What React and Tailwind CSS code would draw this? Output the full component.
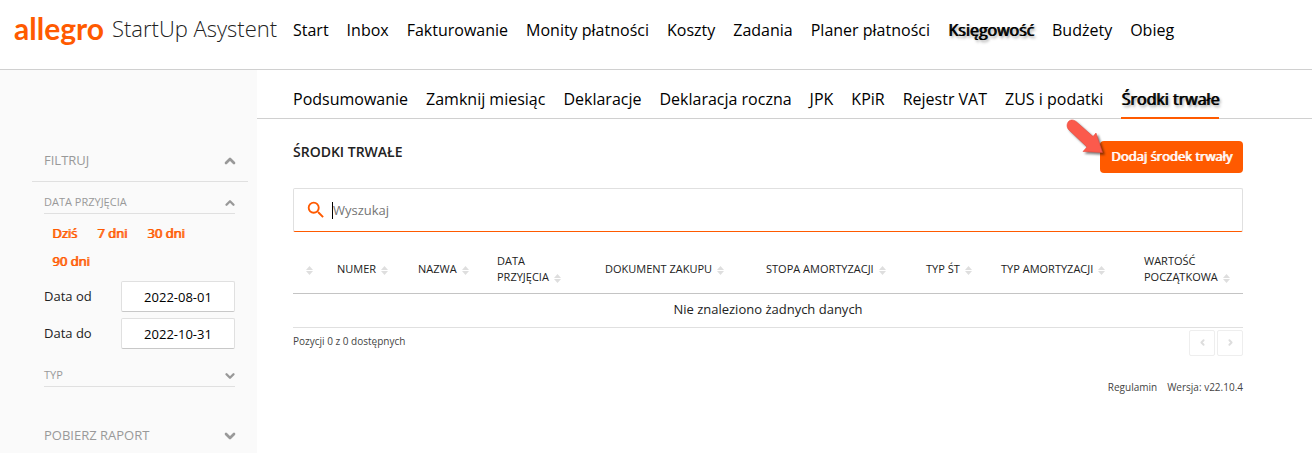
import { ChevronDown, ChevronLeft, ChevronRight, ChevronUp } from 'lucide-react';
import { MdSearch } from 'react-icons/md';

const MAIN_NAV = [
  'Start',
  'Inbox',
  'Fakturowanie',
  'Monity płatności',
  'Koszty',
  'Zadania',
  'Planer płatności',
  'Księgowość',
  'Budżety',
  'Obieg',
];

const SUB_NAV = [
  'Podsumowanie',
  'Zamknij miesiąc',
  'Deklaracje',
  'Deklaracja roczna',
  'JPK',
  'KPiR',
  'Rejestr VAT',
  'ZUS i podatki',
  'Środki trwałe',
];

const RANGES = ['Dziś', '7 dni', '30 dni', '90 dni'];

const COLUMNS = [
  { lines: [], width: 'w-[36px]' },
  { lines: ['NUMER'], width: 'w-[81px]' },
  { lines: ['NAZWA'], width: 'w-[79px]' },
  { lines: ['DATA', 'PRZYJĘCIA'], width: 'w-[108px]' },
  { lines: ['DOKUMENT ZAKUPU'], width: 'w-[161px]' },
  { lines: ['STOPA AMORTYZACJI'], width: 'w-[160px]' },
  { lines: ['TYP ŚT'], width: 'w-[75px]' },
  { lines: ['TYP AMORTYZACJI'], width: 'w-[143px]' },
  { lines: ['WARTOŚĆ', 'POCZĄTKOWA'], width: 'w-[107px]' },
];

const ACTIVE_LINK = '[text-shadow:1px_0_0_currentColor,2px_2px_3px_rgba(0,0,0,0.45)]';

function SortIcon() {
  return (
    <svg className="inline-block align-middle w-[7px] h-[9px] ml-0.5 fill-[#dedede]" viewBox="0 0 7 9" aria-hidden="true">
      <path d="M3.5 0L7 4H0zM0 5h7L3.5 9z" />
    </svg>
  );
}

function Header() {
  return (
    <header className="flex items-center h-[70px] pb-2.5 border-b border-[#d0d0d0] bg-white">
      <a href="#start" className="flex items-center w-[293px] shrink-0 pl-[14px] pb-1 gap-2 whitespace-nowrap">
        <span className="font-['Lato'] font-bold text-[30px] leading-8 text-[#ff5a00]">allegro</span>
        <span className="font-light text-[22px] leading-8 text-[#222]">StartUp Asystent</span>
      </a>
      <nav className="flex gap-[18px] text-base whitespace-nowrap text-black">
        {MAIN_NAV.map((item) => (
          <a key={item} href="#nav" className={item === 'Księgowość' ? ACTIVE_LINK : ''}>
            {item}
          </a>
        ))}
      </nav>
    </header>
  );
}

function Sidebar() {
  return (
    <aside className="w-[257px] shrink-0 bg-[#fafafa] pt-[70px] pl-8 pr-[9px] text-[#999]">
      <button className="flex w-full items-center justify-between h-[42px] pl-3 pr-2.5 border-b border-[#e0e0e0] text-[13px]">
        FILTRUJ
        <ChevronUp size={16} strokeWidth={4} />
      </button>

      <div className="pl-3 pr-[13px]">
        <button className="flex w-full items-end justify-between h-8 pb-[3px] border-b border-[#e0e0e0] text-[11px] leading-4">
          DATA PRZYJĘCIA
          <ChevronUp size={14} strokeWidth={4} className="-mr-0.5" />
        </button>

        {/* Quick ranges */}
        <div className="flex flex-wrap gap-x-5 px-2 pt-1.5 pb-[5px] text-[13px] text-[#ff5a00]">
          {RANGES.map((range) => (
            <button key={range} className="h-7 [text-shadow:1px_0_0_currentColor]">{range}</button>
          ))}
        </div>

        {/* Date range */}
        <div className="flex flex-col gap-1.5 text-[13px] text-[#222]">
          <div className="flex items-center justify-between">
            <label htmlFor="date-from">Data od</label>
            <input
              id="date-from"
              defaultValue="2022-08-01"
              className="w-[114px] h-[31px] rounded-xs border border-[#e0e0e0] border-b-[#c8c8c8] bg-white text-center text-black"
            />
          </div>
          <div className="flex items-center justify-between">
            <label htmlFor="date-to">Data do</label>
            <input
              id="date-to"
              defaultValue="2022-10-31"
              className="w-[114px] h-[31px] rounded-xs border border-[#e0e0e0] border-b-[#c8c8c8] bg-white text-center text-black"
            />
          </div>
        </div>

        <button className="flex w-full items-end justify-between h-[38px] pb-[3px] border-b border-[#e0e0e0] text-[11px] leading-4">
          TYP
          <ChevronDown size={14} strokeWidth={4} className="-mr-0.5" />
        </button>
      </div>

      <button className="flex w-full items-center justify-between mt-[30px] h-[38px] pl-3 pr-2.5 text-[13px]">
        POBIERZ RAPORT
        <ChevronDown size={16} strokeWidth={4} />
      </button>
    </aside>
  );
}

function PointerArrow() {
  return (
    <svg
      className="absolute -left-9 -top-6 w-[44px] h-[42px] drop-shadow-[2px_2px_1px_rgba(0,0,0,0.5)]"
      viewBox="0 0 44 42"
      aria-hidden="true"
    >
      <path
        d="M4.5 4.5C6.5 2.5 9.5 2.5 12 4.5L29 19.5L32 16L38.5 35.5L19 34.5L23 30L5 13C2.5 10.5 2.5 7 4.5 4.5Z"
        fill="#fb5a4c"
        stroke="#e5493d"
        strokeWidth="0.6"
        strokeLinejoin="round"
      />
    </svg>
  );
}

function AssetsTable() {
  return (
    <table className="w-full table-fixed border-collapse">
      <thead>
        <tr className="h-[61px] border-b border-[#c4c4c4]">
          {COLUMNS.map(({ lines, width }, index) => (
            <th
              key={index}
              className={`${width} px-2 pt-[14px] text-left align-middle whitespace-nowrap text-[11px] leading-4 font-normal text-[#222]`}
            >
              {lines.length > 1 && <span className="block">{lines[0]}</span>}
              {lines.length > 0 ? `${lines[lines.length - 1]} ` : <span className="inline-block w-[3px]" />}
              <SortIcon />
            </th>
          ))}
        </tr>
      </thead>
      <tbody>
        <tr className="h-[34px] border-b border-[#e0e0e0]">
          <td colSpan={COLUMNS.length} className="text-center text-[13px] text-[#222]">
            Nie znaleziono żadnych danych
          </td>
        </tr>
      </tbody>
    </table>
  );
}

export default function App() {
  return (
    <div className="flex flex-col min-h-screen bg-white font-['Open_Sans',sans-serif]">
      <Header />
      <div className="flex flex-1">
        <Sidebar />
        <div className="flex-1 min-w-0">
          <nav className="flex h-[49px] gap-[18px] pl-9 border-b border-[#d0d0d0] text-base whitespace-nowrap text-black">
            {SUB_NAV.map((item) => (
              <a
                key={item}
                href="#subnav"
                className={
                  item === 'Środki trwałe'
                    ? `h-[49px] pt-[17px] border-b-2 border-[#ff5a00] ${ACTIVE_LINK}`
                    : 'pt-[17px]'
                }
              >
                {item}
              </a>
            ))}
          </nav>

          <main className="pl-9 pr-[69px]">
            <div className="flex items-start justify-between pt-[22px]">
              <h1 className="text-sm leading-[22px] font-semibold text-[#222]">ŚRODKI TRWAŁE</h1>
              <div className="relative">
                <button className="h-8 px-[11px] rounded-sm bg-[#ff5a00] text-[13px] text-white [text-shadow:1px_0_0_currentColor]">
                  Dodaj środek trwały
                </button>
                <PointerArrow />
              </div>
            </div>

            <label className="flex items-center mt-[15px] h-11 pl-[11px] rounded-xs border border-[#e0e0e0] border-b-[#ff5a00]">
              <MdSearch className="size-[22px] text-[#ff5a00]" aria-label="Szukaj" />
              <span className="ml-[5px] w-px h-[17px] bg-black" />
              <input placeholder="Wyszukaj" className="flex-1 h-full text-[13px] outline-none placeholder:text-[#757575]" />
            </label>

            <AssetsTable />

            {/* Pagination */}
            <div className="flex justify-between pt-0.5">
              <p className="pt-[3px] text-[10px] leading-4 text-[#444]">Pozycji 0 z 0 dostępnych</p>
              <div className="flex gap-0.5 text-[#ddd]">
                <button aria-label="Poprzednia" className="grid place-items-center size-[26px] rounded-xs border border-[#eee]">
                  <ChevronLeft size={9} strokeWidth={5} />
                </button>
                <button aria-label="Następna" className="grid place-items-center size-[26px] rounded-xs border border-[#eee]">
                  <ChevronRight size={9} strokeWidth={5} />
                </button>
              </div>
            </div>

            <footer className="flex justify-end gap-2.5 pt-[23px] text-[10px] leading-4 text-[#444]">
              <a href="#regulamin">Regulamin</a>
              <span>Wersja: v22.10.4</span>
            </footer>
          </main>
        </div>
      </div>
    </div>
  );
}
